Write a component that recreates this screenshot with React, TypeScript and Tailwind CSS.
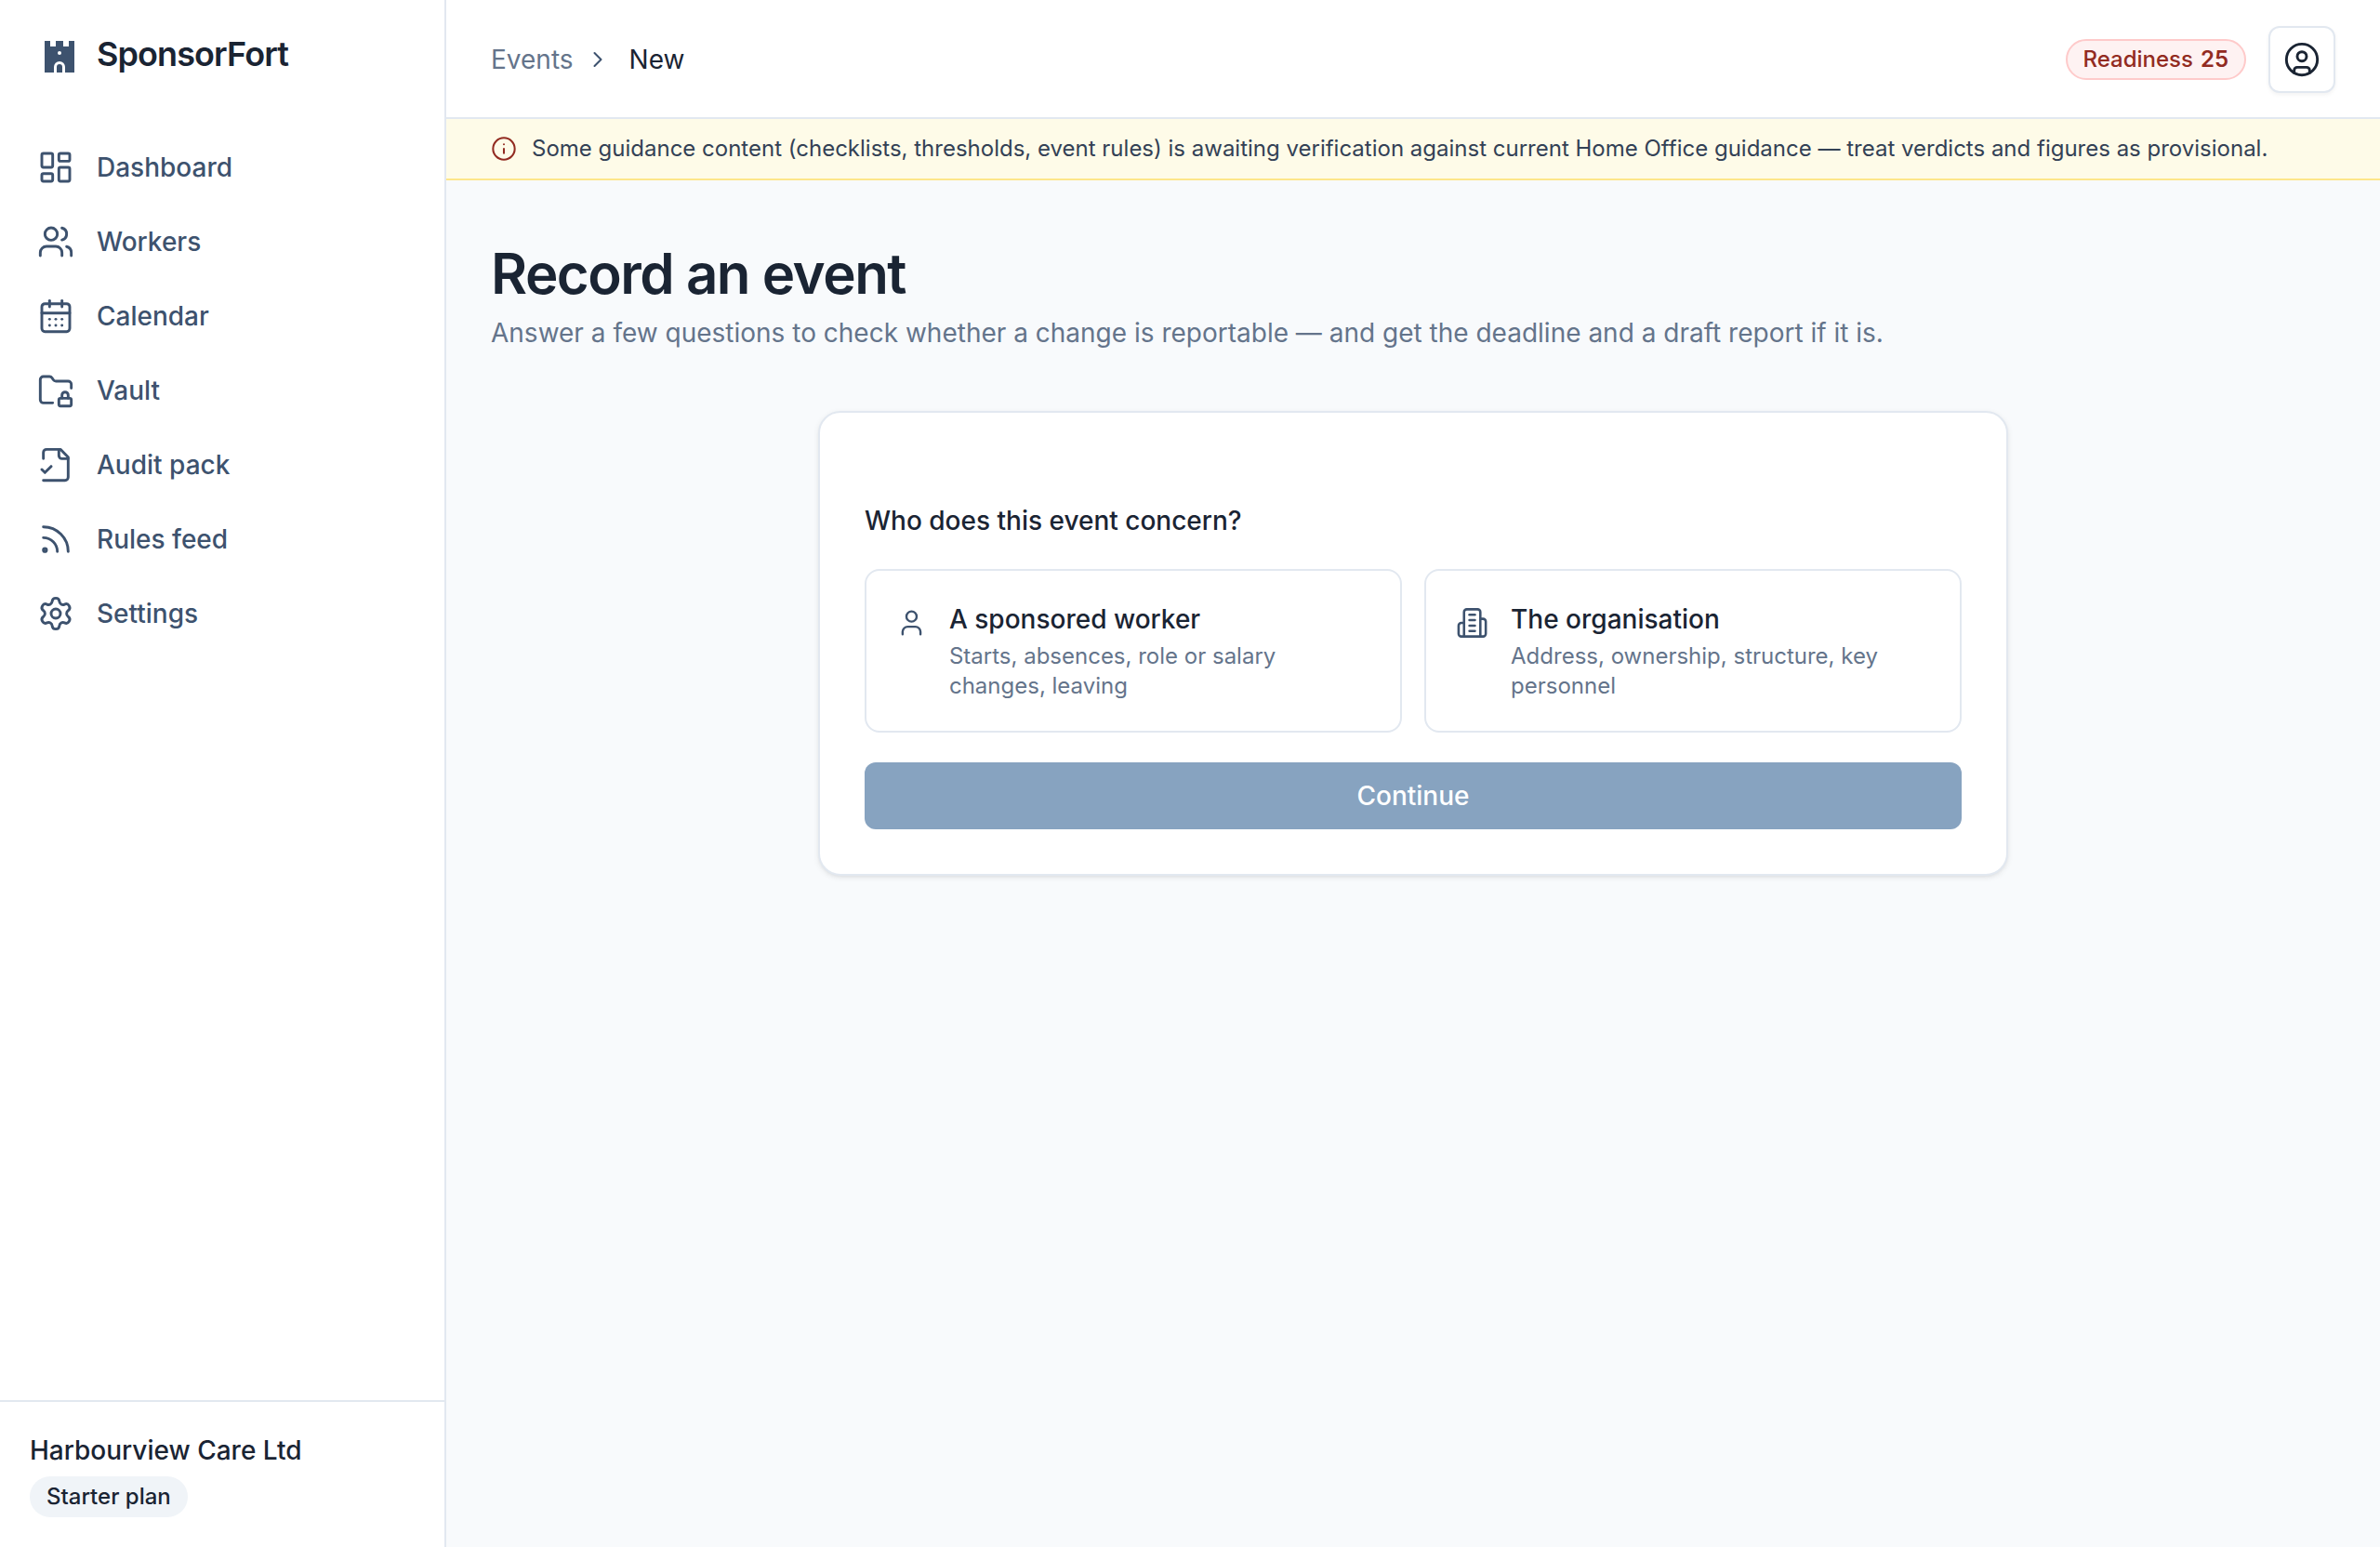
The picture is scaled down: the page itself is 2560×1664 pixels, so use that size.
import type { ComponentType, ReactNode } from 'react'
import {
  CalendarDays,
  ChevronRight,
  CircleUser,
  FolderLock,
  Info,
  LayoutDashboard,
  Rss,
  Settings,
  User,
  Users,
} from 'lucide-react'

type IconProps = { size?: number; strokeWidth?: number; className?: string }

function StrokeIcon({ size = 24, strokeWidth = 2, className, children }: IconProps & { children: ReactNode }) {
  return (
    <svg
      width={size}
      height={size}
      viewBox="0 0 24 24"
      fill="none"
      stroke="currentColor"
      strokeWidth={strokeWidth}
      strokeLinecap="round"
      strokeLinejoin="round"
      className={className}
      aria-hidden="true"
    >
      {children}
    </svg>
  )
}

function FileCheck(props: IconProps) {
  return (
    <StrokeIcon {...props}>
      <path d="M4 22h14a2 2 0 0 0 2-2V7l-5-5H6a2 2 0 0 0-2 2v4" />
      <path d="M14 2v4a2 2 0 0 0 2 2h4" />
      <path d="m3 15 2 2 4-4" />
    </StrokeIcon>
  )
}

function Building(props: IconProps) {
  return (
    <StrokeIcon {...props}>
      <path d="M6 22V4a2 2 0 0 1 2-2h8a2 2 0 0 1 2 2v18Z" />
      <path d="M6 12H4a2 2 0 0 0-2 2v6a2 2 0 0 0 2 2h2" />
      <path d="M18 9h2a2 2 0 0 1 2 2v9a2 2 0 0 1-2 2h-2" />
      <path d="M10 6h4" />
      <path d="M10 10h4" />
      <path d="M10 14h4" />
      <path d="M10 18h4" />
    </StrokeIcon>
  )
}

function FortLogo() {
  return (
    <svg width="32" height="34" viewBox="0 0 32 34" aria-hidden="true">
      <path d="M0 0h6v6h6V0h8v6h6V0h6v34H0z" fill="#3d526e" />
      <circle cx="16" cy="13" r="2" fill="#fff" />
      <path d="M10 34v-6a6 6 0 0 1 12 0v6z" fill="#fff" />
      <path d="M13 34v-6a3 3 0 0 1 6 0v6z" fill="#3d526e" />
    </svg>
  )
}

const navItems: { icon: ComponentType<IconProps>; label: string }[] = [
  { icon: LayoutDashboard, label: 'Dashboard' },
  { icon: Users, label: 'Workers' },
  { icon: CalendarDays, label: 'Calendar' },
  { icon: FolderLock, label: 'Vault' },
  { icon: FileCheck, label: 'Audit pack' },
  { icon: Rss, label: 'Rules feed' },
  { icon: Settings, label: 'Settings' },
]

const subjects: { icon: ComponentType<IconProps>; title: string; text: string }[] = [
  { icon: User, title: 'A sponsored worker', text: 'Starts, absences, role or salary changes, leaving' },
  { icon: Building, title: 'The organisation', text: 'Address, ownership, structure, key personnel' },
]

function Sidebar() {
  return (
    <aside className="flex w-[480px] shrink-0 flex-col border-r-2 border-[#e2e8f0] bg-white">
      <a href="#" className="flex h-20 items-start gap-6 px-12 pt-10">
        <span className="pt-1">
          <FortLogo />
        </span>
        <span className="text-4xl leading-9 font-semibold tracking-tight">SponsorFort</span>
      </a>

      <nav className="flex flex-col gap-2 px-4 pt-16">
        {navItems.map((item) => (
          <a
            key={item.label}
            href="#"
            className="flex h-[72px] items-center gap-6 rounded-xl px-6 text-[28px] font-medium text-[#3d526e]"
          >
            <item.icon size={40} strokeWidth={1.75} />
            {item.label}
          </a>
        ))}
      </nav>

      <div className="mt-auto flex flex-col items-start gap-2 border-t-2 border-[#e2e8f0] p-8">
        <p className="text-[28px] leading-10 font-medium">Harbourview Care Ltd</p>
        <span className="rounded-full bg-[#f0f4f8] px-[18px] py-1.5 text-2xl font-medium">Starter plan</span>
      </div>
    </aside>
  )
}

function Header() {
  return (
    <header className="flex h-32 items-center justify-between border-b-2 border-[#e2e8f0] bg-white px-12 pt-0.5">
      <nav aria-label="Breadcrumb" className="flex items-center gap-3 text-[28px]">
        <a href="#" className="text-[#64748b]">Events</a>
        <ChevronRight size={28} strokeWidth={1.75} className="text-[#3d526e]" />
        <span className="pl-2">New</span>
      </nav>

      <div className="flex items-center gap-6">
        <a
          href="#"
          className="flex items-center gap-2 rounded-full border-2 border-[#fecaca] bg-[#fef2f2] px-[17px] py-1 text-2xl font-medium text-[#922b21]"
        >
          Readiness <span className="font-semibold">25</span>
        </a>
        <button
          type="button"
          aria-label="Account"
          className="flex size-[72px] items-center justify-center rounded-xl border-2 border-[#e2e8f0] bg-white shadow-[0_2px_4px_rgba(0,0,0,0.05)]"
        >
          <CircleUser size={40} strokeWidth={1.75} />
        </button>
      </div>
    </header>
  )
}

export default function App() {
  return (
    <div className="flex min-h-screen bg-[#f8fafc] font-[Inter,sans-serif] text-[#1a2433]">
      <Sidebar />

      <div className="flex min-w-0 flex-1 flex-col">
        <Header />

        <div className="flex items-center gap-4 border-b-2 border-[#fde68a] bg-[#fefbe8] px-12 py-4 text-2xl text-[#334155]">
          <Info size={28} strokeWidth={1.75} className="shrink-0 text-[#922b21]" />
          <p>
            Some guidance content (checklists, thresholds, event rules) is awaiting verification against current Home
            Office guidance — treat verdicts and figures as provisional.
          </p>
        </div>

        <main className="px-12 py-16">
          <h1 className="text-6xl leading-[72px] font-semibold tracking-tight">Record an event</h1>
          <p className="mt-2 text-[28px] leading-10 text-[#64748b]">
            Answer a few questions to check whether a change is reportable — and get the deadline and a draft report if
            it is.
          </p>

          <form className="mx-auto mt-16 flex max-w-[1280px] flex-col rounded-3xl border-2 border-[#e2e8f0] bg-white px-12 pt-24 pb-12 shadow-[0_2px_6px_rgba(0,0,0,0.08),0_2px_4px_-2px_rgba(0,0,0,0.08)]">
            <h2 className="text-[28px] leading-10 font-medium">Who does this event concern?</h2>
            <div className="mt-8 grid grid-cols-2 gap-6">
              {subjects.map((subject) => (
                <button
                  key={subject.title}
                  type="button"
                  className="flex items-start gap-6 rounded-2xl border-2 border-[#e2e8f0] bg-white p-8 text-left"
                >
                  <subject.icon size={40} strokeWidth={1.75} className="mt-1 text-[#3d526e]" />
                  <span className="flex flex-col gap-1">
                    <span className="text-[28px] leading-10 font-medium">{subject.title}</span>
                    <span className="text-2xl leading-8 text-[#64748b]">{subject.text}</span>
                  </span>
                </button>
              ))}
            </div>
            <button type="submit" disabled className="mt-8 h-[72px] rounded-xl bg-[#87a3c0] text-[28px] font-medium text-white">
              Continue
            </button>
          </form>
        </main>
      </div>
    </div>
  )
}
